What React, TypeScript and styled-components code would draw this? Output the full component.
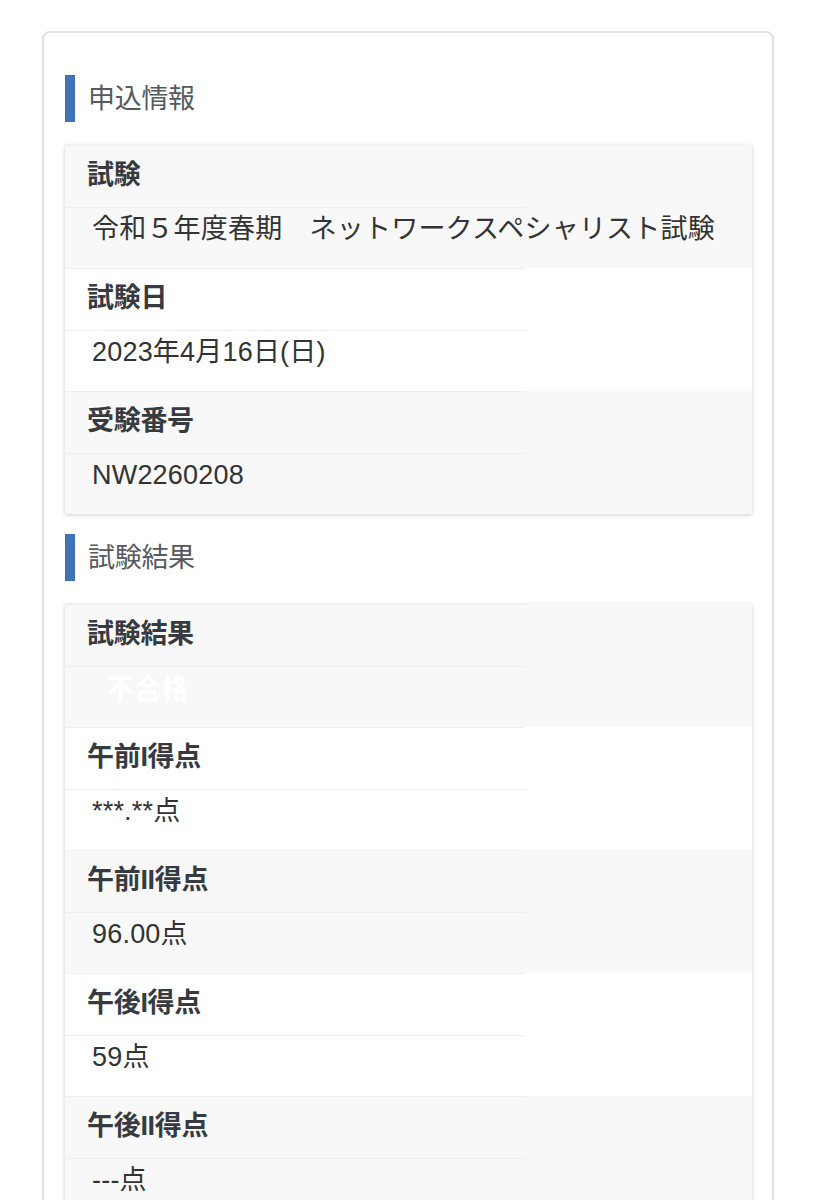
import React from "react";
import styled, { createGlobalStyle } from "styled-components";

interface IRow {
  label: string;
  value: string;
  badge?: boolean;
}

const applyRows: Array<IRow> = [
  { label: "試験", value: "令和５年度春期　ネットワークスペシャリスト試験" },
  { label: "試験日", value: "2023年4月16日(日)" },
  { label: "受験番号", value: "NW2260208" },
];

const resultRows: Array<IRow> = [
  { label: "試験結果", value: "不合格", badge: true },
  { label: "午前I得点", value: "***.**点" },
  { label: "午前II得点", value: "96.00点" },
  { label: "午後I得点", value: "59点" },
  { label: "午後II得点", value: "---点" },
];

function InfoTable(props: { rows: Array<IRow> }) {
  return (
    <TableCard>
      {props.rows.map((row, i) => (
        <Row key={row.label} striped={i % 2 === 0}>
          <LabelCell>{row.label}</LabelCell>
          <ValueCell>
            {row.badge ? <Badge>{row.value}</Badge> : row.value}
          </ValueCell>
        </Row>
      ))}
    </TableCard>
  );
}

export default function App() {
  return (
    <>
      <GlobalStyle />
      <Page>
        <Card>
          <SectionTitle>申込情報</SectionTitle>
          <InfoTable rows={applyRows} />
          <SectionTitle>試験結果</SectionTitle>
          <InfoTable rows={resultRows} />
        </Card>
      </Page>
    </>
  );
}

const GlobalStyle = createGlobalStyle`
  body {
    margin: 0;
    background: #ffffff;
    font-family: "Liberation Sans", "Noto Sans CJK JP", sans-serif;
    color: #333333;
  }
`;

const Page = styled.div`
  padding: 31px 43px 0 42px;
`;

const Card = styled.div`
  border: 2px solid #e0e0e0;
  border-bottom: none;
  border-radius: 8px 8px 0 0;
  padding: 42px 20px 40px 21px;
  min-height: 1200px;
`;

const SectionTitle = styled.h2`
  display: flex;
  align-items: center;
  height: 47px;
  margin: 0 0 23px;
  padding: 0 0 4px 13px;
  box-sizing: border-box;
  border-left: 10px solid #3f74b4;
  font-size: 27px;
  font-weight: 400;
  color: #555a5f;
  letter-spacing: -0.3px;
`;

const TableCard = styled.div`
  box-shadow: 0 1px 4px rgba(0, 0, 0, 0.2);
  margin-bottom: 20px;
`;

const Row = styled.div<{ striped: boolean }>`
  background: ${(p) => (p.striped ? "#f8f8f8" : "#ffffff")};
  height: 123px;
`;

const LabelCell = styled.div`
  box-sizing: border-box;
  width: 460px;
  height: 62px;
  padding: 11px 0 0 22px;
  border-top: 1px solid #efefef;
  font-size: 27px;
  line-height: 36px;
  font-weight: 700;
  color: #373b3f;
  letter-spacing: -0.3px;
`;

const ValueCell = styled.div`
  box-sizing: border-box;
  width: 460px;
  height: 61px;
  padding: 3px 0 0 27px;
  border-top: 1px solid #efefef;
  font-size: 27px;
  line-height: 36px;
  color: #333333;
  white-space: nowrap;
  letter-spacing: 0.2px;
`;

const Badge = styled.span`
  display: inline-block;
  padding: 2px 0 0 15px;
  color: #ffffff;
  font-weight: 700;
`;
